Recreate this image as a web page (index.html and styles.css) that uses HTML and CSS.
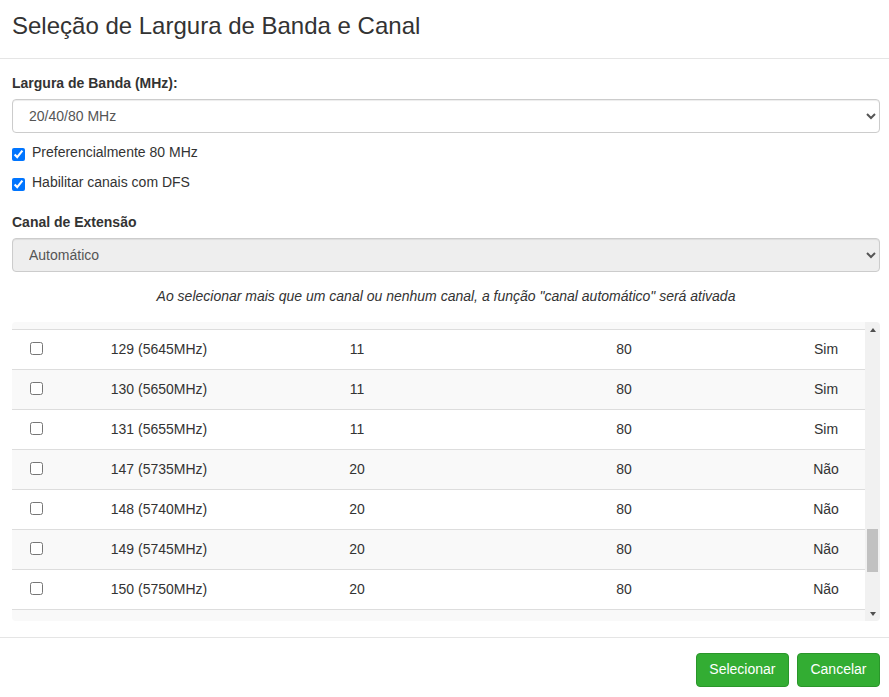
FILE: index.html
```html
<!DOCTYPE html>
<html lang="pt-BR">
<head>
<meta charset="utf-8">
<title>Seleção de Largura de Banda e Canal</title>
<link rel="stylesheet" href="styles.css">
</head>
<body>
<div class="modal">
  <div class="modal-header">
    <h4 class="modal-title">Seleção de Largura de Banda e Canal</h4>
  </div>
  <div class="modal-body">
    <label class="field-label" for="bw">Largura de Banda (MHz):</label>
    <select class="form-control" id="bw">
      <option>20 MHz</option>
      <option>20/40 MHz</option>
      <option selected>20/40/80 MHz</option>
    </select>
    <label class="check check-first"><input type="checkbox" checked><span>Preferencialmente 80 MHz</span></label>
    <label class="check"><input type="checkbox" checked><span>Habilitar canais com DFS</span></label>

    <label class="field-label field-gap" for="ext">Canal de Extensão</label>
    <select class="form-control" id="ext" disabled>
      <option>Automático</option>
    </select>

    <p class="note">Ao selecionar mais que um canal ou nenhum canal, a função "canal automático" será ativada</p>

    <div class="table-wrap">
      <div class="table-view">
        <div class="tr striped partial-top"></div>
        <div class="tr"><div class="td"><input type="checkbox"></div><div class="td">129 (5645MHz)</div><div class="td">11</div><div class="td">80</div><div class="td">Sim</div></div>
        <div class="tr striped"><div class="td"><input type="checkbox"></div><div class="td">130 (5650MHz)</div><div class="td">11</div><div class="td">80</div><div class="td">Sim</div></div>
        <div class="tr"><div class="td"><input type="checkbox"></div><div class="td">131 (5655MHz)</div><div class="td">11</div><div class="td">80</div><div class="td">Sim</div></div>
        <div class="tr striped"><div class="td"><input type="checkbox"></div><div class="td">147 (5735MHz)</div><div class="td">20</div><div class="td">80</div><div class="td">Não</div></div>
        <div class="tr"><div class="td"><input type="checkbox"></div><div class="td">148 (5740MHz)</div><div class="td">20</div><div class="td">80</div><div class="td">Não</div></div>
        <div class="tr striped"><div class="td"><input type="checkbox"></div><div class="td">149 (5745MHz)</div><div class="td">20</div><div class="td">80</div><div class="td">Não</div></div>
        <div class="tr"><div class="td"><input type="checkbox"></div><div class="td">150 (5750MHz)</div><div class="td">20</div><div class="td">80</div><div class="td">Não</div></div>
        <div class="tr striped partial-bottom"></div>
      </div>
      <div class="scrollbar" aria-hidden="true">
        <span class="sb-btn"><span class="sb-arrow-up"></span></span>
        <span class="sb-before"></span>
        <span class="sb-thumb"></span>
        <span class="sb-after"></span>
        <span class="sb-btn"><span class="sb-arrow-down"></span></span>
      </div>
    </div>
  </div>
  <div class="modal-footer">
    <button class="btn" type="button">Selecionar</button>
    <button class="btn" type="button">Cancelar</button>
  </div>
</div>
</body>
</html>
```

FILE: styles.css
```css
* {
  box-sizing: border-box;
}

html,
body {
  margin: 0;
  background: #fff;
}

body {
  font-family: "Liberation Sans", Arial, Helvetica, sans-serif;
  font-size: 14px;
  line-height: 20px;
  color: #333;
}

.modal-header {
  padding: 12px 12px 19px;
  border-bottom: 1px solid #e5e5e5;
}

.modal-title {
  margin: 0;
  font-size: 24px;
  line-height: 27px;
  font-weight: normal;
  color: #333;
}

.modal-body {
  padding: 14px 9px 16px 12px;
}

.field-label {
  display: block;
  font-weight: bold;
  margin-bottom: 6px;
}

.field-gap {
  margin-top: 20px;
}

.form-control {
  display: block;
  width: 100%;
  height: 34px;
  padding: 6px 12px;
  font-family: inherit;
  font-size: 14px;
  line-height: 20px;
  color: #555;
  background-color: #fff;
  border: 1px solid #ccc;
  border-radius: 4px;
  box-shadow: inset 0 1px 1px rgba(0, 0, 0, 0.075);
}

.form-control:disabled {
  background-color: #eee;
  color: #555;
  opacity: 1;
}

.check {
  display: flex;
  align-items: flex-start;
  gap: 7px;
  margin-top: 10px;
  height: 20px;
}

.check-first {
  margin-top: 9px;
}

.check input {
  width: 13px;
  height: 13px;
  margin: 6px 0 0 0;
}

.note {
  margin: 14px 0 16px;
  text-align: center;
  font-style: italic;
}

/* channel table */
.table-wrap {
  display: flex;
  height: 299px;
  border-radius: 4px;
  overflow: hidden;
}

.table-view {
  flex: 1;
  display: flex;
  flex-direction: column;
}

.tr {
  display: grid;
  grid-template-columns: 48px 198px 198px 336px 68px 1fr;
  height: 40px;
  flex: none;
  border-top: 1px solid #ddd;
  background: #fff;
}

.tr.striped {
  background: #f9f9f9;
}

.tr.partial-top {
  height: 7px;
  border-top: 0;
}

.tr.partial-bottom {
  height: 12px;
}

.td {
  display: flex;
  align-items: center;
  justify-content: center;
  padding-bottom: 2px;
  text-align: center;
  white-space: nowrap;
}

.td input {
  width: 13px;
  height: 13px;
  margin: -1px 0 0 0;
}

/* scrollbar */
.scrollbar {
  width: 15px;
  flex: none;
  display: flex;
  flex-direction: column;
  background: #f1f1f1;
}

.sb-btn {
  height: 15px;
  flex: none;
  display: flex;
  align-items: center;
  justify-content: center;
}

.sb-arrow-up {
  width: 0;
  height: 0;
  border-left: 3.5px solid transparent;
  border-right: 3.5px solid transparent;
  border-bottom: 4px solid #505050;
}

.sb-arrow-down {
  width: 0;
  height: 0;
  border-left: 3.5px solid transparent;
  border-right: 3.5px solid transparent;
  border-top: 4px solid #505050;
}

.sb-before {
  height: 192px;
  flex: none;
}

.sb-thumb {
  height: 43px;
  flex: none;
  margin: 0 2px;
  background: #c1c1c1;
}

.sb-after {
  flex: 1;
}

/* footer */
.modal-footer {
  display: flex;
  justify-content: flex-end;
  gap: 8px;
  padding: 15px 9px 10px 12px;
  border-top: 1px solid #e5e5e5;
}

.btn {
  height: 34px;
  padding: 5px 12.5px 7px;
  font-family: inherit;
  font-size: 14px;
  line-height: 20px;
  color: #fff;
  background-color: #33ad33;
  border: 1px solid #2a962a;
  border-radius: 4px;
  cursor: pointer;
}
```
